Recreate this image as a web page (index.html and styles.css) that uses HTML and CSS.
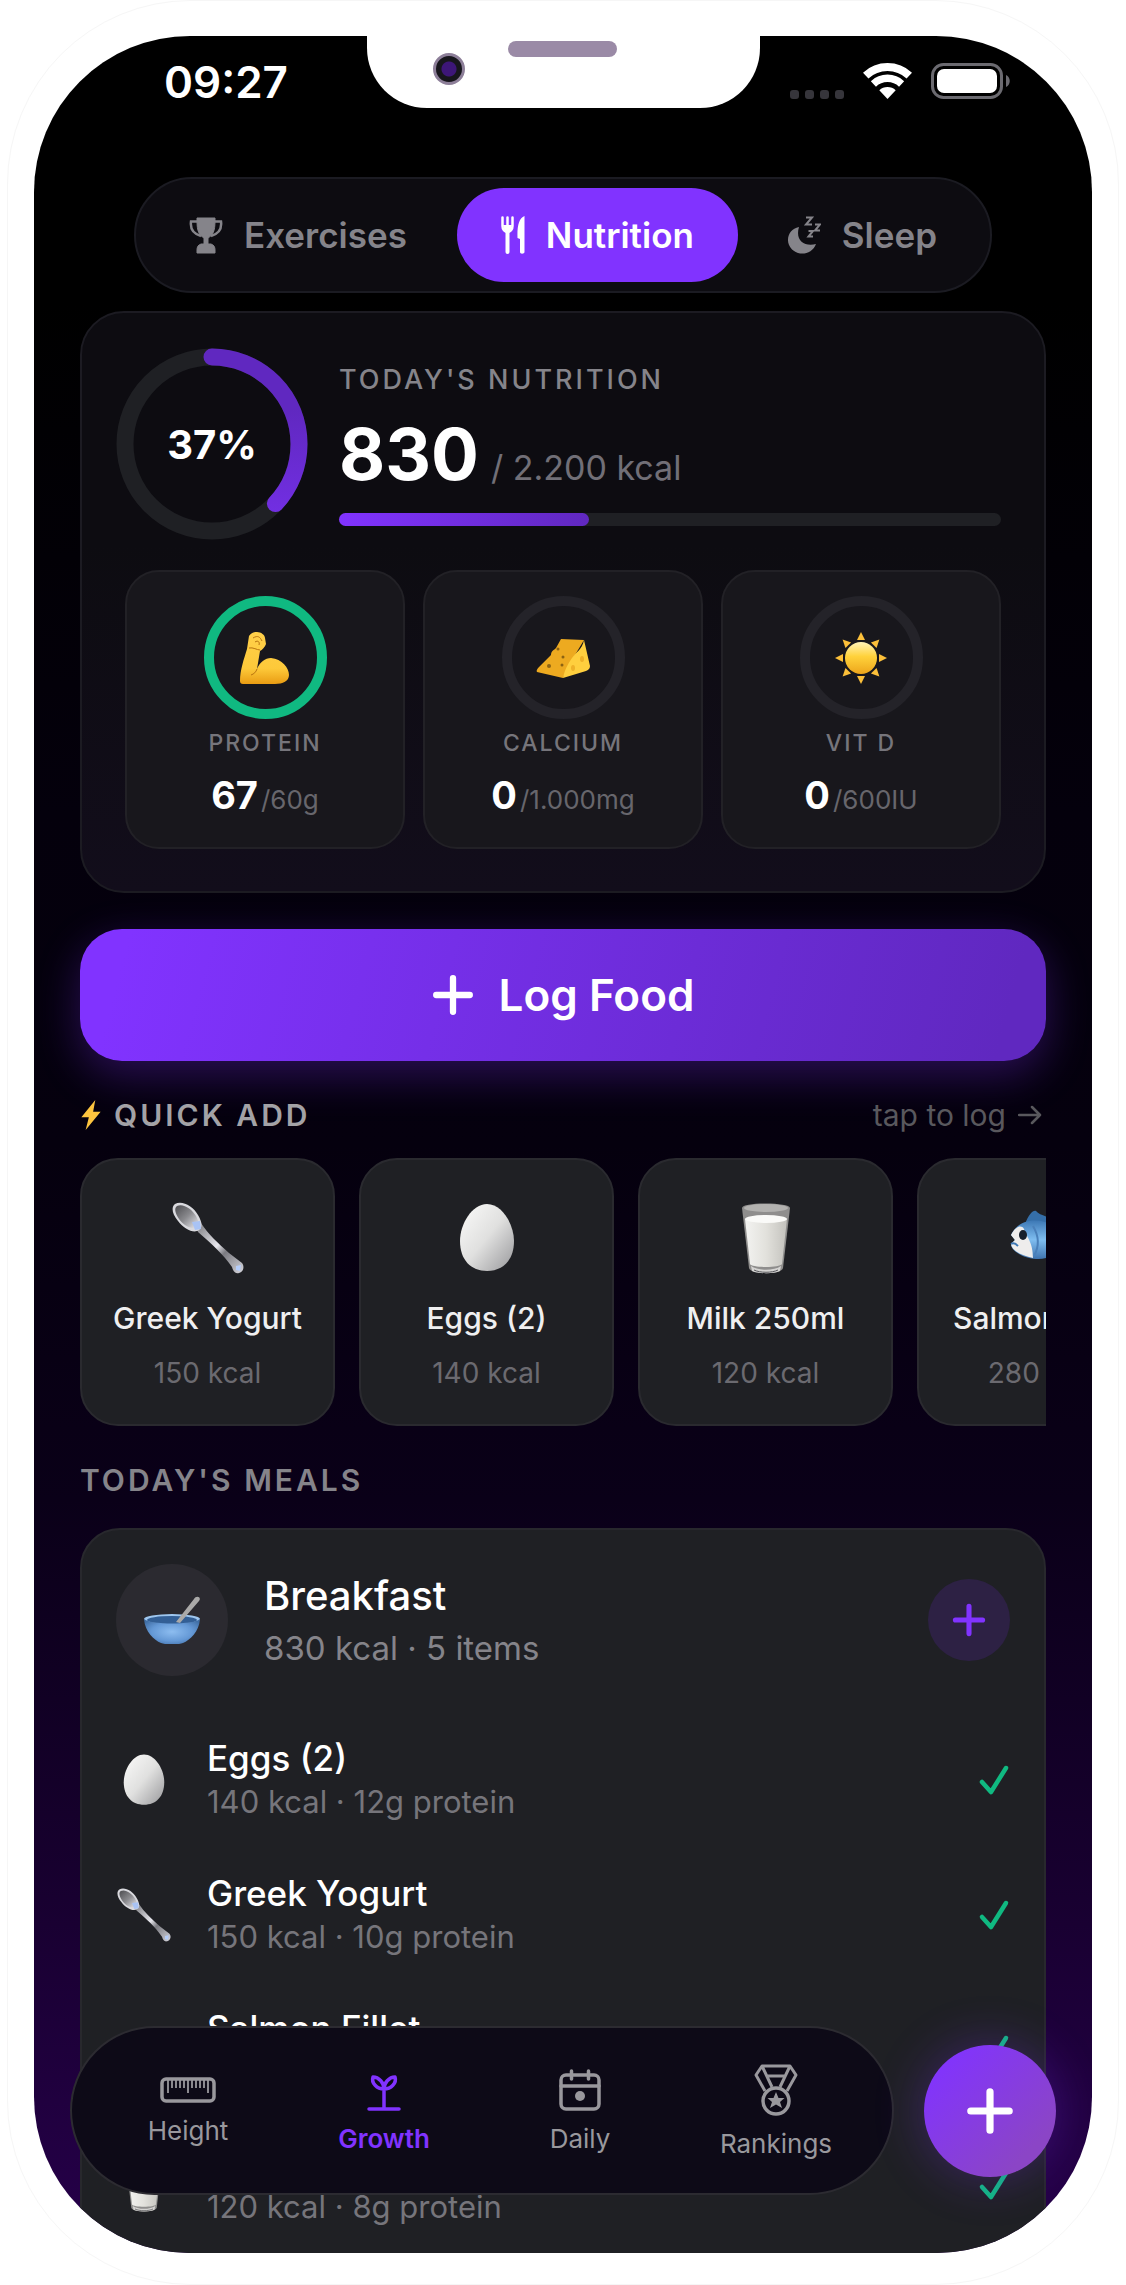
FILE: index.html
```html
<!DOCTYPE html>
<html lang="en">
<head>
<meta charset="utf-8">
<meta name="viewport" content="width=device-width, initial-scale=1">
<title>Nutrition</title>
<link rel="stylesheet" href="styles.css">
</head>
<body>
<svg class="sprite" aria-hidden="true">
  <defs>
    <linearGradient id="g-metal" x1="0" y1="0" x2="1" y2="1"><stop offset="0" stop-color="#77777b"/><stop offset=".45" stop-color="#e8e8ee"/><stop offset=".6" stop-color="#7a7a80"/><stop offset="1" stop-color="#d5d5dc"/></linearGradient>
    <linearGradient id="g-bowl" x1="0" y1="0" x2="1" y2="1"><stop offset="0" stop-color="#4c4c50"/><stop offset=".5" stop-color="#8a8a8e"/><stop offset="1" stop-color="#ededf2"/></linearGradient>
    <linearGradient id="g-egg" x1="0" y1="0" x2="1" y2="1"><stop offset=".1" stop-color="#f6f6f5"/><stop offset=".5" stop-color="#e0e0df"/><stop offset="1" stop-color="#98989b"/></linearGradient>
    <linearGradient id="g-milk" x1="0" y1="0" x2="1" y2="0"><stop offset="0" stop-color="#f3f3f1"/><stop offset=".5" stop-color="#e2e1dc"/><stop offset="1" stop-color="#c3c2bd"/></linearGradient>
    <linearGradient id="g-skin" x1="0" y1="0" x2="0" y2="1"><stop offset="0" stop-color="#ffd04a"/><stop offset=".7" stop-color="#fdc93a"/><stop offset="1" stop-color="#e99c13"/></linearGradient>
    <linearGradient id="g-sun" x1="0" y1="0" x2="0" y2="1"><stop offset="0" stop-color="#fff3b8"/><stop offset=".45" stop-color="#ffd23b"/><stop offset="1" stop-color="#eda51b"/></linearGradient>
    <radialGradient id="g-dish" cx=".5" cy=".5" r=".6"><stop offset="0" stop-color="#8dbdf0"/><stop offset=".6" stop-color="#6599d6"/><stop offset="1" stop-color="#416fa6"/></radialGradient>
    <linearGradient id="g-fish" x1="0" y1="0" x2="0" y2="1"><stop offset="0" stop-color="#3d78b5"/><stop offset=".5" stop-color="#7fbdf0"/><stop offset="1" stop-color="#3f74b0"/></linearGradient>
    <linearGradient id="g-ring" x1="1" y1="0" x2="0" y2="0"><stop offset=".3" stop-color="#6028c0"/><stop offset="1" stop-color="#7530e8"/></linearGradient>
  </defs>
  <symbol id="spoon" viewBox="0 0 72 72">
    <path d="M24 24 29 21C36 32 46 41 57 51L70 61C73 65 71 70 67 71C63 72 61 69 60 65C51 52 40 42 26 30Z" fill="url(#g-metal)"/>
    <path d="M3 2C10-2 21 4 26 13C30 20 31 25 27 28C22 32 12 27 6 19C0 12-1 5 3 2Z" fill="#d9d9de"/>
    <path d="M5 4C11 1 20 7 24 14C27 20 28 24 25 25C20 28 12 24 7 17C3 11 2 6 5 4Z" fill="url(#g-bowl)"/>
    <path d="M20 20 28 19 29 27 23 28Z" fill="#a9c3f4"/>
    <path d="M64 64 69 63 68 69 64 68Z" fill="#b5cdfa"/>
  </symbol>
  <symbol id="egg" viewBox="0 0 72 72">
    <path d="M36 2C51 2 63 22 63 39C63 58 52 69 36 69S9 58 9 39C9 22 21 2 36 2Z" fill="url(#g-egg)"/>
  </symbol>
  <symbol id="milk" viewBox="0 0 72 72">
    <path d="M12 6C12 0 60 0 60 6L53 66C52 73 20 73 19 66Z" fill="#8f8e8d"/>
    <ellipse cx="36" cy="6" rx="22" ry="4" fill="#b3b2b0"/>
    <path d="M15 17H57L52 62C50 66 22 66 20 62Z" fill="url(#g-milk)"/>
    <ellipse cx="36" cy="17" rx="21" ry="4" fill="#fafaf8"/>
    <path d="M21 64C28 69 44 69 51 64L50 69C44 72 28 72 22 69Z" fill="#d5d4d2"/>
    <path d="M24 68C30 71 42 71 48 68" fill="none" stroke="#55555a" stroke-width="1"/>
  </symbol>
  <symbol id="fish" viewBox="0 0 72 72">
    <path d="M16 22C20 12 24 8 27 9C31 14 40 14 47 19L44 30Z" fill="#356fa9"/>
    <path d="M2 33C8 20 22 16 36 20C46 23 52 29 57 33L70 22C68 32 68 42 71 52L56 43C48 52 38 58 27 57C14 56 2 49 2 42L6 38Z" fill="url(#g-fish)"/>
    <path d="M2 33C6 25 12 22 15 27C18 36 24 40 24 56C13 54 3 49 2 42L6 38Z" fill="#eeedec"/>
    <path d="M24 24C30 34 30 45 25 54" fill="none" stroke="#4a80ba" stroke-width="2"/>
    <ellipse cx="14" cy="33" rx="4" ry="5" fill="#17202c"/>
    <path d="M2 42C5 40 7 42 9 44" fill="none" stroke="#3d78b5" stroke-width="2"/>
  </symbol>
  <symbol id="dish" viewBox="0 0 56 48">
    <ellipse cx="28" cy="23" rx="28" ry="5" fill="#9ec6ee"/>
    <ellipse cx="28" cy="24" rx="25" ry="4" fill="#335f95"/>
    <path d="M32 26 50 3C52-1 58 1 55 5L36 27Z" fill="#aaa9a8"/>
    <path d="M0 23C6 29 50 29 56 23C55 36 46 44 39 47C34 49 22 49 17 47C10 44 1 36 0 23Z" fill="url(#g-dish)"/>
  </symbol>
  <symbol id="arm" viewBox="0 0 50 52">
    <path d="M9 4C11 1 14 0 17 0C21 0 25 3 25 6L26 12C25 15 22 18 20 19L17 37C20 30 25 26 31 26C42 27 49 36 49 43C49 49 43 52 35 52H3C1 52 0 51 0 49C0 38 4 27 7 17Z" fill="url(#g-skin)"/>
    <path d="M17 37C16 40 14 42 11 43M13 6C18 3 20 5 22 9M15 10C18 8 20 10 19 13M9 16C13 15 17 18 20 18" fill="none" stroke="#b87410" stroke-width="1"/>
  </symbol>
  <symbol id="cheese" viewBox="0 0 54 40">
    <path d="M25 1 48 2 36 22 27 40 1 34C0 33 1 31 3 29L15 17C15 13 18 12 20 10Z" fill="#edaa20"/>
    <path d="M48 2 54 28C54 31 52 32 50 33L27 40C29 30 34 23 36 20 40 14 46 12 48 2Z" fill="#ffcf3e"/>
    <g fill="#8c6312"><circle cx="13" cy="28" r="2"/><circle cx="27" cy="19" r="1.500"/><circle cx="26" cy="27" r="1.500"/><circle cx="22" cy="11" r="1.500"/></g>
    <g fill="#efb128"><ellipse cx="46" cy="21" rx="2" ry="3"/><ellipse cx="37" cy="30" rx="2" ry="3"/></g>
  </symbol>
  <symbol id="sun" viewBox="0 0 52 52">
    <circle cx="26" cy="26" r="16" fill="url(#g-sun)"/>
    <g fill="#fcc03a"><path id="ray" d="M22 8 26 0 30 8Z"/><use href="#ray" transform="rotate(45 26 26)"/><use href="#ray" transform="rotate(90 26 26)"/><use href="#ray" transform="rotate(135 26 26)"/><use href="#ray" transform="rotate(180 26 26)"/><use href="#ray" transform="rotate(225 26 26)"/><use href="#ray" transform="rotate(270 26 26)"/><use href="#ray" transform="rotate(315 26 26)"/></g>
  </symbol>
  <symbol id="plus" viewBox="0 0 40 40"><path d="M20 4V36M4 20H36" fill="none" stroke="currentColor" stroke-width="6" stroke-linecap="round"/></symbol>
  <symbol id="check" viewBox="0 0 32 32"><path d="M4 18 13 28 28 4" fill="none" stroke="currentColor" stroke-width="4.500" stroke-linecap="round" stroke-linejoin="round"/></symbol>
</svg>

<div class="phone">
  <div class="screen">
    <div class="notch"><span class="speaker"></span><span class="camera"></span></div>

    <header class="status">
      <time class="clock">09:27</time>
      <div class="indicators">
        <span class="signal"><i></i><i></i><i></i><i></i></span>
        <svg class="wifi" viewBox="0 0 49 36"><path d="M2.700 12.600A32 32 0 0 1 46.300 12.600" fill="none" stroke="#fff" stroke-width="8"/><path d="M10.400 20.900A20.700 20.700 0 0 1 38.600 20.900" fill="none" stroke="#fff" stroke-width="7.500"/><path d="M24.500 36 16.300 27.200A12 12 0 0 1 32.700 27.200Z" fill="#fff"/></svg>
        <svg class="battery" viewBox="0 0 79 36"><rect x="1.500" y="1.500" width="69" height="33" rx="11" fill="none" stroke="#6b6a70" stroke-width="3"/><rect x="6" y="6" width="60" height="24" rx="7" fill="#fff"/><path d="M75 12C80 14 80 22 75 24Z" fill="#6b6a70"/></svg>
      </div>
    </header>

    <main class="content">
      <nav class="tabs" aria-label="Sections">
        <button class="tab" type="button">
          <svg class="i-trophy" viewBox="0 0 34 37"><path d="M8 1H26V4C26 14 24 18 19 21V27H22C25 28 26 30 26 33V36H8V33C8 30 9 28 12 27H15V21C10 18 8 14 8 4Z" fill="currentColor" stroke="currentColor" stroke-linejoin="round"/><path d="M8 4.500H2C1 12 5 17 12 19M26 4.500H32C33 12 29 17 22 19" fill="none" stroke="currentColor" stroke-width="2.500"/></svg>
          Exercises
        </button>
        <button class="tab tab-active" type="button">
          <svg class="i-fork" viewBox="0 0 24 38"><path d="M1.500 1.500V10C1.500 14 3.500 15 6.500 16.500C9.500 15 11.500 14 11.500 10V1.500M6.500 1.500V35.500" fill="none" stroke="currentColor" stroke-width="2.500" stroke-linecap="round"/><path d="M6.500 14V36" stroke="currentColor" stroke-width="4" stroke-linecap="round"/><path d="M2 9H11L9 16H4Z" fill="currentColor"/><path d="M23.500 0V36C23.500 38 19 38.500 19 36V23L16.500 22C16 10 18 2 23.500 0Z" fill="currentColor"/></svg>
          Nutrition
        </button>
        <button class="tab" type="button">
          <svg class="i-moon" viewBox="0 0 33 38"><path d="M11 11C7 24 16 31 28 28C25 36 17 39 10 37C-4 32-3 14 11 11Z" fill="currentColor"/><path d="M18 1.500H24L18 8.500H24M27 8.500H32L27 14.500H32M20.500 15H25L20.500 20.500H25" fill="none" stroke="currentColor" stroke-width="2"/></svg>
          Sleep
        </button>
      </nav>

      <section class="card summary">
        <div class="summary-head">
          <div class="ring">
            <svg viewBox="0 0 192 192"><circle cx="96" cy="96" r="87" fill="none" stroke="#1f2024" stroke-width="17"/><circle cx="96" cy="96" r="87" fill="none" stroke="url(#g-ring)" stroke-width="17" stroke-linecap="round" stroke-dasharray="202 547" transform="rotate(-90 96 96)"/></svg>
            <strong class="ring-label">37%</strong>
          </div>
          <div class="totals">
            <h2 class="overline">TODAY'S NUTRITION</h2>
            <p class="total"><strong>830</strong> <span>/ 2.200 kcal</span></p>
            <div class="bar"><div class="bar-fill" style="width:37.7%"></div></div>
          </div>
        </div>
        <div class="macros">
          <div class="macro">
            <div class="macro-ring macro-done"><svg class="i-arm"><use href="#arm"/></svg></div>
            <h3>PROTEIN</h3>
            <p><strong>67</strong><span>/60g</span></p>
          </div>
          <div class="macro">
            <div class="macro-ring"><svg class="i-cheese"><use href="#cheese"/></svg></div>
            <h3>CALCIUM</h3>
            <p><strong>0</strong><span>/1.000mg</span></p>
          </div>
          <div class="macro">
            <div class="macro-ring"><svg class="i-sun"><use href="#sun"/></svg></div>
            <h3>VIT D</h3>
            <p><strong>0</strong><span>/600IU</span></p>
          </div>
        </div>
      </section>

      <button class="log" type="button"><svg><use href="#plus"/></svg>Log Food</button>

      <section>
        <div class="section-head">
          <h2 class="heading heading-light"><svg class="i-bolt" viewBox="0 0 20 28"><path d="M14 0 1 16H8L5 28 19 11H12Z" fill="#fdc43f"/></svg>QUICK ADD</h2>
          <p class="hint">tap to log <svg viewBox="0 0 24 20"><path d="M1 10H22M14 2 22 10 14 18" fill="none" stroke="currentColor" stroke-width="2.500" stroke-linecap="round" stroke-linejoin="round"/></svg></p>
        </div>
        <div class="quick">
          <button class="food" type="button"><svg><use href="#spoon"/></svg><b>Greek Yogurt</b><span>150 kcal</span></button>
          <button class="food" type="button"><svg><use href="#egg"/></svg><b>Eggs (2)</b><span>140 kcal</span></button>
          <button class="food" type="button"><svg><use href="#milk"/></svg><b>Milk 250ml</b><span>120 kcal</span></button>
          <button class="food" type="button"><svg><use href="#fish"/></svg><b>Salmon Fillet</b><span>280 kcal</span></button>
        </div>
      </section>

      <section>
        <h2 class="heading">TODAY'S MEALS</h2>
        <div class="meals">
          <div class="meal-head">
            <div class="meal-icon"><svg><use href="#dish"/></svg></div>
            <div class="meal-text">
              <h3>Breakfast</h3>
              <p>830 kcal · 5 items</p>
            </div>
            <button class="meal-add" type="button" aria-label="Add to breakfast"><svg><use href="#plus"/></svg></button>
          </div>
          <ul class="items">
            <li><svg class="item-icon"><use href="#egg"/></svg><div class="item-text"><b>Eggs (2)</b><span>140 kcal · 12g protein</span></div><svg class="item-check"><use href="#check"/></svg></li>
            <li><svg class="item-icon"><use href="#spoon"/></svg><div class="item-text"><b>Greek Yogurt</b><span>150 kcal · 10g protein</span></div><svg class="item-check"><use href="#check"/></svg></li>
            <li><svg class="item-icon"><use href="#fish"/></svg><div class="item-text"><b>Salmon Fillet</b><span>280 kcal</span></div><svg class="item-check"><use href="#check"/></svg></li>
            <li><svg class="item-icon"><use href="#milk"/></svg><div class="item-text"><b>Milk 250ml</b><span>120 kcal · 8g protein</span></div><svg class="item-check"><use href="#check"/></svg></li>
          </ul>
        </div>
      </section>
    </main>

    <footer class="dock">
      <nav class="dock-nav" aria-label="Main">
        <a href="#height"><svg class="i-ruler" viewBox="0 0 56 26"><rect x="2" y="2" width="52" height="22" rx="4" fill="none" stroke="currentColor" stroke-width="3.500"/><path d="M8 3V16M12 3V11M16 3V11M20 3V11M24 3V11M28 3V16M32 3V11M36 3V11M40 3V11M44 3V11M48 3V16" stroke="currentColor" stroke-width="1.800"/></svg>Height</a>
        <a href="#growth" class="current"><svg class="i-cal" viewBox="0 0 42 42"><path d="M6 40H36M21 40V20C21 14 26 8 32 8C34 14 28 20 21 20C14 20 8 14 10 8C16 8 21 14 21 20" fill="none" stroke="currentColor" stroke-width="3.500" stroke-linecap="round" stroke-linejoin="round"/></svg>Growth</a>
        <a href="#daily"><svg class="i-cal" viewBox="0 0 42 42"><rect x="2" y="6" width="38" height="34" rx="5" fill="none" stroke="currentColor" stroke-width="3.500"/><path d="M2 17H40M12.500 2V10M29.500 2V10" stroke="currentColor" stroke-width="3.500" stroke-linecap="round"/><circle cx="21" cy="27" r="5" fill="currentColor"/></svg>Daily</a>
        <a href="#rankings"><svg class="i-medal" viewBox="0 0 44 52"><path d="M11 27 2 11 8 2H36L42 11 33 27M8 2 18 23M36 2 26 23M13 12H31" fill="none" stroke="currentColor" stroke-width="3" stroke-linejoin="round"/><circle cx="22" cy="37" r="13" fill="none" stroke="currentColor" stroke-width="3.500"/><path d="M22 28 24.500 34H30.500L26 38 28 44 22 40.500 16 44 18 38 13.500 34H19.500Z" fill="currentColor"/></svg>Rankings</a>
      </nav>
      <button class="fab" type="button" aria-label="Add"><svg><use href="#plus"/></svg></button>
    </footer>
  </div>
</div>
</body>
</html>
```

FILE: styles.css
```css
* { box-sizing: border-box; }

body {
  margin: 0;
  background: #fff;
  color: #fff;
  font-family: Inter, "Liberation Sans", sans-serif;
}

h2, h3, p, ul { margin: 0; padding: 0; }
ul { list-style: none; }
svg { display: block; flex: none; }
button { margin: 0; border: 0; padding: 0; font: inherit; color: inherit; cursor: pointer; }
.sprite { position: absolute; width: 0; height: 0; }

/* Device */
.phone {
  height: 100vh;
  margin: 0 7px;
  padding: 35px 26px 31px;
  border: 1px solid #f6f6f6;
  border-radius: 184px;
}

.screen {
  position: relative;
  height: 100%;
  overflow: hidden;
  border-radius: 156px;
  background: linear-gradient(#000 0%, #000 12%, #04000c 35%, #05000e 50%, #0a0018 66%, #180030 84%, #26004a 100%);
}

.notch {
  position: absolute;
  top: 0;
  left: 50%;
  width: 393px;
  height: 72px;
  margin-left: -196px;
  border-radius: 0 0 60px 60px;
  background: #fff;
}

.speaker {
  position: absolute;
  top: 5px;
  left: 141px;
  width: 109px;
  height: 16px;
  border-radius: 8px;
  background: #9a8aa6;
}

.camera {
  position: absolute;
  top: 17px;
  left: 66px;
  width: 32px;
  height: 32px;
  border: 3px solid #8d7f99;
  border-radius: 50%;
  background: radial-gradient(#3d1678 0 7px, #17161c 8px);
}

.status {
  display: flex;
  align-items: flex-start;
  justify-content: space-between;
  height: 141px;
  padding: 21px 82px 0 130px;
}

.clock { font-size: 44px; line-height: 50px; font-weight: 600; }

.indicators { display: flex; align-items: flex-end; gap: 19px; height: 42px; }
.signal { display: flex; gap: 6px; }
.signal i { width: 9px; height: 9px; border-radius: 3px; background: #36353b; }
.wifi { width: 49px; height: 36px; }
.battery { width: 79px; height: 36px; }

.content {
  display: flex;
  flex-direction: column;
  gap: 36px;
  padding: 0 46px;
}

/* Section tabs */
.tabs {
  display: flex;
  gap: 6px;
  align-self: center;
  margin-bottom: -18px;
  padding: 9px;
  border: 2px solid #1b1b22;
  border-radius: 58px;
  background: #0d0c11;
}

.tab {
  display: flex;
  align-items: center;
  gap: 21px;
  height: 94px;
  padding: 0 44px;
  border-radius: 47px;
  background: none;
  color: #85848a;
  font-size: 35px;
  font-weight: 600;
}

.tab-active { background: #8133ff; color: #fff; }
.i-trophy { width: 34px; height: 37px; }
.i-fork { width: 24px; height: 38px; }
.i-moon { width: 33px; height: 38px; }

/* Daily summary */
.card {
  padding: 35px 34px 42px;
  border: 2px solid #1c1b22;
  border-radius: 44px;
  background: linear-gradient(#0d0c11 40%, #120d1b);
}

.summary-head { display: flex; align-items: center; gap: 31px; padding-right: 9px; }
.ring { display: grid; place-items: center; width: 192px; height: 192px; }
.ring svg, .ring-label { grid-area: 1 / 1; }
.ring svg { width: 192px; height: 192px; }
.ring-label { font-size: 40px; font-weight: 700; }

.totals { flex: 1; min-width: 0; display: flex; flex-direction: column; gap: 18px; }
.overline { color: #85848a; font-size: 27px; line-height: 34px; font-weight: 500; letter-spacing: 3px; }
.total { display: flex; align-items: baseline; gap: 12px; height: 80px; line-height: 78px; }
.total strong { font-size: 71px; font-weight: 700; }
.total span { color: #716f77; font-size: 34px; }
.bar { height: 13px; border-radius: 7px; background: #1f2024; }
.bar-fill { height: 100%; border-radius: 7px; background: linear-gradient(90deg, #8133ff, #6028c0); }

.macros { display: grid; grid-template-columns: repeat(3, 1fr); gap: 18px; margin: 30px 9px 0; }

.macro {
  display: flex;
  flex-direction: column;
  align-items: center;
  padding: 24px 0 30px;
  border: 2px solid #222126;
  border-radius: 34px;
  background: #18171c;
}

.macro-ring {
  display: grid;
  place-items: center;
  width: 123px;
  height: 123px;
  border: 10px solid #242329;
  border-radius: 50%;
}

.macro-done { border-color: #10b981; }
.i-arm { width: 50px; height: 52px; }
.i-cheese { width: 54px; height: 40px; }
.i-sun { width: 52px; height: 52px; }
.macro h3 { margin-top: 9px; color: #76757b; font-size: 23px; line-height: 30px; font-weight: 500; letter-spacing: 2px; }
.macro p { display: flex; align-items: baseline; gap: 3px; height: 44px; margin-top: 15px; line-height: 44px; }
.macro strong { font-size: 38px; font-weight: 700; }
.macro span { color: #67666c; font-size: 26px; }

.log {
  display: flex;
  align-items: center;
  justify-content: center;
  gap: 25px;
  height: 132px;
  border-radius: 42px;
  background: linear-gradient(105deg, #8133ff 5%, #6028c0 95%);
  box-shadow: 0 14px 44px rgba(129, 51, 255, .3);
  font-size: 44px;
  font-weight: 600;
}

.log svg { width: 42px; height: 42px; }

/* Quick add */
.section-head { display: flex; align-items: center; justify-content: space-between; margin-bottom: 25px; }
.heading { display: flex; align-items: center; gap: 12px; color: #85848a; font-size: 30px; line-height: 36px; font-weight: 600; letter-spacing: 3px; }
.heading-light { color: #a3a2a6; }
.i-bolt { width: 22px; height: 30px; }
.hint { display: flex; align-items: center; gap: 12px; padding-right: 4px; color: #59585d; font-size: 30px; line-height: 36px; }
.hint svg { width: 24px; height: 20px; }

.quick { display: flex; gap: 24px; overflow: hidden; }

.food {
  flex: none;
  display: flex;
  flex-direction: column;
  align-items: center;
  width: 255px;
  padding: 42px 0 34px;
  border: 2px solid #2a2a2f;
  border-radius: 38px;
  background: #1f2024;
}

.food svg { width: 72px; height: 72px; }
.food b { margin-top: 26px; color: #efeff0; font-size: 30px; line-height: 36px; font-weight: 500; }
.food span { margin-top: 20px; color: #6b6a70; font-size: 28px; line-height: 34px; }

/* Meals */
.meals {
  margin-top: 30px;
  padding: 34px 34px 60px;
  border: 2px solid #28282d;
  border-radius: 40px;
  background: #1f2024;
}

.meal-head { display: flex; align-items: center; gap: 36px; margin-bottom: 36px; }
.meal-icon { display: grid; place-items: center; width: 112px; height: 112px; border-radius: 50%; background: #2b2a30; }
.meal-icon svg { width: 56px; height: 48px; }
.meal-text { flex: 1; }
.meal-text h3 { font-size: 40px; line-height: 48px; font-weight: 500; }
.meal-text p { margin-top: 8px; color: #85848a; font-size: 33px; line-height: 40px; }
.meal-add { display: grid; place-items: center; width: 82px; height: 82px; border-radius: 50%; background: #2d2144; color: #8133ff; }
.meal-add svg { width: 34px; height: 34px; }

.items li { display: flex; align-items: center; gap: 35px; height: 135px; }
.item-icon { width: 56px; height: 54px; }
.item-text { flex: 1; }
.item-text b, .item-text span { display: block; line-height: 44px; }
.item-text b { font-size: 35px; font-weight: 500; }
.item-text span { color: #76757b; font-size: 31px; }
.item-check { width: 32px; height: 32px; color: #10b981; }

/* Floating dock */
.dock {
  position: absolute;
  right: 36px;
  bottom: 58px;
  left: 36px;
  display: flex;
  align-items: center;
  gap: 30px;
}

.dock-nav {
  flex: 1;
  display: grid;
  grid-template-columns: repeat(4, 1fr);
  height: 169px;
  padding: 0 18px;
  border: 2px solid #2c2b31;
  border-radius: 85px;
  background: #0d0a17;
}

.dock-nav a {
  display: flex;
  flex-direction: column;
  align-items: center;
  justify-content: center;
  gap: 15px;
  color: #99989d;
  font-size: 26px;
  line-height: 26px;
  text-decoration: none;
}

.dock-nav .current { color: #8133ff; font-weight: 600; }
.i-ruler { width: 56px; height: 26px; }
.i-cal { width: 42px; height: 42px; }
.i-medal { width: 44px; height: 52px; }

.fab {
  display: grid;
  place-items: center;
  width: 132px;
  height: 132px;
  border-radius: 50%;
  background: linear-gradient(135deg, #8133ff 10%, #8b45c6 80%);
  box-shadow: 0 0 50px rgba(129, 51, 255, .3);
}

.fab svg { width: 48px; height: 48px; }
```
